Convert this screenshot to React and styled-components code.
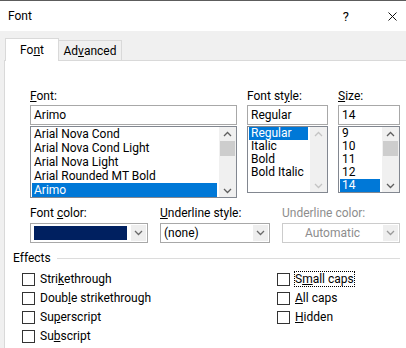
import React from 'react';
import styled, { createGlobalStyle } from 'styled-components';

const GlobalStyle = createGlobalStyle`
  body {
    margin: 0;
    font-family: Roboto, "Noto Sans", sans-serif;
    font-size: 12px;
    color: #000;
  }
`;

const fonts = ['Arial Nova Cond', 'Arial Nova Cond Light', 'Arial Nova Light', 'Arial Rounded MT Bold', 'Arimo'];
const styles = ['Regular', 'Italic', 'Bold', 'Bold Italic'];
const sizes = ['9', '10', '11', '12', '14'];

const Chevron = ({ up, color = '#5f5f5f' }) => (
  <svg width="9" height="6" viewBox="0 0 9 6">
    <path
      d={up ? 'M1 5 L4.5 1.5 L8 5' : 'M1 1 L4.5 4.5 L8 1'}
      fill="none"
      stroke={color}
      strokeWidth="1.3"
    />
  </svg>
);

const Key = ({ children }) => <u>{children}</u>;

const Scrollbar = ({ disabled }) => (
  <ScrollTrack>
    <ScrollButton><Chevron up color={disabled ? '#c4c4c4' : '#5f5f5f'} /></ScrollButton>
    {!disabled && <Thumb />}
    <ScrollSpacer />
    <ScrollButton><Chevron color={disabled ? '#c4c4c4' : '#5f5f5f'} /></ScrollButton>
  </ScrollTrack>
);

const ListBox = ({ items, selected, itemHeight, height, disabledScroll }) => (
  <List $height={height}>
    <Items>
      {items.map((item) => (
        <Item key={item} $h={itemHeight} $active={item === selected}>{item}</Item>
      ))}
    </Items>
    <Scrollbar disabled={disabledScroll} />
  </List>
);

const Dropdown = ({ width, children, disabled }) => (
  <Combo $width={width} $disabled={disabled}>
    <ComboValue $disabled={disabled}>{children}</ComboValue>
    <ComboButton><Chevron color={disabled ? '#9a9a9a' : '#6a6a6a'} /></ComboButton>
  </Combo>
);

const Check = ({ label, focused }) => (
  <CheckRow>
    <Box />
    <CheckLabel $focused={focused}>{label}</CheckLabel>
  </CheckRow>
);

export default function App() {
  return (
    <>
      <GlobalStyle />
      <Window>
        <TitleBar>
          <Title>Font</Title>
          <TitleButtons>
            <Help>?</Help>
            <svg width="9" height="9" viewBox="0 0 9 9">
              <path d="M0.5 0.5 L8.5 8.5 M8.5 0.5 L0.5 8.5" stroke="#111" strokeWidth="1" />
            </svg>
          </TitleButtons>
        </TitleBar>
        <Body>
          <Tabs>
            <Tab $active>Fo<Key>n</Key>t</Tab>
            <Tab>Ad<Key>v</Key>anced</Tab>
          </Tabs>
          <Panel>
            <TopRow>
              <Column $width={207}>
                <Label><Key>F</Key>ont:</Label>
                <TextBox>Arimo</TextBox>
                <ListBox items={fonts} selected="Arimo" itemHeight={14} height={72} />
              </Column>
              <Column $width={81}>
                <Label>Font st<Key>y</Key>le:</Label>
                <TextBox>Regular</TextBox>
                <ListBox items={styles} selected="Regular" itemHeight={13} height={67} disabledScroll />
              </Column>
              <Column $width={62}>
                <Label><Key>S</Key>ize:</Label>
                <TextBox>14</TextBox>
                <ListBox items={sizes} selected="14" itemHeight={13} height={67} />
              </Column>
            </TopRow>
            <ColorRow>
              <Column $width={118}>
                <Label>Font <Key>c</Key>olor:</Label>
                <Dropdown width={118}><Swatch /></Dropdown>
              </Column>
              <Column $width={110}>
                <Label><Key>U</Key>nderline style:</Label>
                <Dropdown width={110}>(none)</Dropdown>
              </Column>
              <Column $width={118}>
                <Label $disabled>Underline color:</Label>
                <Dropdown width={118} disabled>Automatic</Dropdown>
              </Column>
            </ColorRow>
            <Section>
              <SectionTitle>Effects</SectionTitle>
              <Rule />
            </Section>
            <Effects>
              <EffectColumn $width={255}>
                <Check label={<>Stri<Key>k</Key>ethrough</>} />
                <Check label={<>Doub<Key>l</Key>e strikethrough</>} />
                <Check label={<>Su<Key>p</Key>erscript</>} />
                <Check label={<>Su<Key>b</Key>script</>} />
              </EffectColumn>
              <EffectColumn>
                <Check focused label={<>S<Key>m</Key>all caps</>} />
                <Check label={<><Key>A</Key>ll caps</>} />
                <Check label={<><Key>H</Key>idden</>} />
              </EffectColumn>
            </Effects>
          </Panel>
        </Body>
      </Window>
    </>
  );
}

const Window = styled.div`
  width: 406px;
  height: 348px;
  overflow: hidden;
  display: flex;
  flex-direction: column;
  border-top: 1px solid #5c5c5c;
  box-sizing: border-box;
  background: #f0f0f0;
`;

const TitleBar = styled.div`
  height: 30px;
  flex: none;
  background: #fff;
  display: flex;
  align-items: center;
  padding: 0 9px 0 8px;
`;

const Title = styled.div`
  flex: 1;
  font-size: 12px;
`;

const TitleButtons = styled.div`
  display: flex;
  align-items: center;
  gap: 39px;
`;

const Help = styled.span`
  font-size: 13px;
`;

const Body = styled.div`
  flex: 1;
  display: flex;
  flex-direction: column;
  padding: 7px 0 0 4px;
`;

const Tabs = styled.div`
  height: 22px;
  display: flex;
  align-items: flex-end;
  padding-left: 1px;
`;

const Tab = styled.div`
  position: relative;
  z-index: ${(p) => (p.$active ? 1 : 0)};
  box-sizing: border-box;
  height: ${(p) => (p.$active ? '23px' : '20px')};
  width: ${(p) => (p.$active ? '54px' : '64px')};
  margin-bottom: ${(p) => (p.$active ? '-1px' : '0')};
  margin-left: ${(p) => (p.$active ? '0' : '-1px')};
  background: ${(p) => (p.$active ? '#fff' : '#f0f0f0')};
  border: 1px solid #d9d9d9;
  border-bottom: none;
  display: flex;
  align-items: center;
  justify-content: center;
  padding-top: ${(p) => (p.$active ? '0' : '1px')};
`;

const Panel = styled.div`
  flex: 1;
  background: #fff;
  border-top: 1px solid #d9d9d9;
  border-left: 1px solid #d9d9d9;
  padding: 28px 0 0 8px;
`;

const TopRow = styled.div`
  display: flex;
  align-items: flex-start;
  gap: 10px;
  padding-left: 17px;
`;

const ColorRow = styled(TopRow)`
  margin-top: 8px;
  gap: 12px;
`;

const Column = styled.div`
  width: ${(p) => p.$width}px;
  display: flex;
  flex-direction: column;
`;

const Label = styled.div`
  height: 14px;
  line-height: 14px;
  margin-bottom: 2px;
  white-space: nowrap;
  color: ${(p) => (p.$disabled ? '#8d8d8d' : '#000')};
`;

const TextBox = styled.div`
  box-sizing: border-box;
  height: 20px;
  border: 1px solid #a8a8a8;
  padding-left: 3px;
  line-height: 18px;
  margin-bottom: 1px;
`;

const List = styled.div`
  box-sizing: border-box;
  height: ${(p) => p.$height}px;
  border: 1px solid #828790;
  display: flex;
`;

const Items = styled.div`
  flex: 1;
  min-width: 0;
  padding: 0 2px 0 1px;
`;

const Item = styled.div`
  height: ${(p) => p.$h}px;
  line-height: ${(p) => p.$h}px;
  padding-left: 2px;
  white-space: nowrap;
  background: ${(p) => (p.$active ? '#0078d7' : 'transparent')};
  color: ${(p) => (p.$active ? '#fff' : '#000')};
`;

const ScrollTrack = styled.div`
  width: 17px;
  flex: none;
  background: #f0f0f0;
  display: flex;
  flex-direction: column;
`;

const ScrollButton = styled.div`
  height: 13px;
  display: flex;
  align-items: center;
  justify-content: center;
  flex: none;
`;

const Thumb = styled.div`
  height: 15px;
  margin: 1px 1px 0;
  background: #cdcdcd;
`;

const ScrollSpacer = styled.div`
  flex: 1;
`;

const Combo = styled.div`
  box-sizing: border-box;
  width: ${(p) => p.$width}px;
  height: 20px;
  margin-top: 1px;
  border: 1px solid ${(p) => (p.$disabled ? '#cccccc' : '#a8a8a8')};
  display: flex;
  align-items: stretch;
  background: #fff;
`;

const ComboValue = styled.div`
  flex: 1;
  display: flex;
  align-items: center;
  justify-content: ${(p) => (p.$disabled ? 'center' : 'flex-start')};
  padding: 2px 3px;
  color: ${(p) => (p.$disabled ? '#8d8d8d' : '#000')};
`;

const ComboButton = styled.div`
  width: 15px;
  margin: 1px;
  background: #eeeeee;
  display: flex;
  align-items: center;
  justify-content: center;
`;

const Swatch = styled.div`
  flex: 1;
  align-self: stretch;
  background: #002060;
`;

const Section = styled.div`
  margin-top: 8px;
  display: flex;
  align-items: center;
  gap: 6px;
  padding-right: 6px;
  height: 14px;
`;

const SectionTitle = styled.div`
  line-height: 14px;
`;

const Rule = styled.div`
  flex: 1;
  height: 1px;
  background: #dcdcdc;
`;

const Effects = styled.div`
  display: flex;
  padding: 7px 0 0 9px;
`;

const EffectColumn = styled.div`
  width: ${(p) => (p.$width ? `${p.$width}px` : 'auto')};
  display: flex;
  flex-direction: column;
  gap: 5px;
`;

const CheckRow = styled.div`
  height: 14px;
  display: flex;
  align-items: center;
  gap: 5px;
`;

const Box = styled.div`
  box-sizing: border-box;
  width: 13px;
  height: 13px;
  border: 1px solid #333;
  background: #fff;
`;

const CheckLabel = styled.div`
  line-height: 14px;
  white-space: nowrap;
  outline: ${(p) => (p.$focused ? '1px dotted #000' : 'none')};
  outline-offset: 0;
`;
